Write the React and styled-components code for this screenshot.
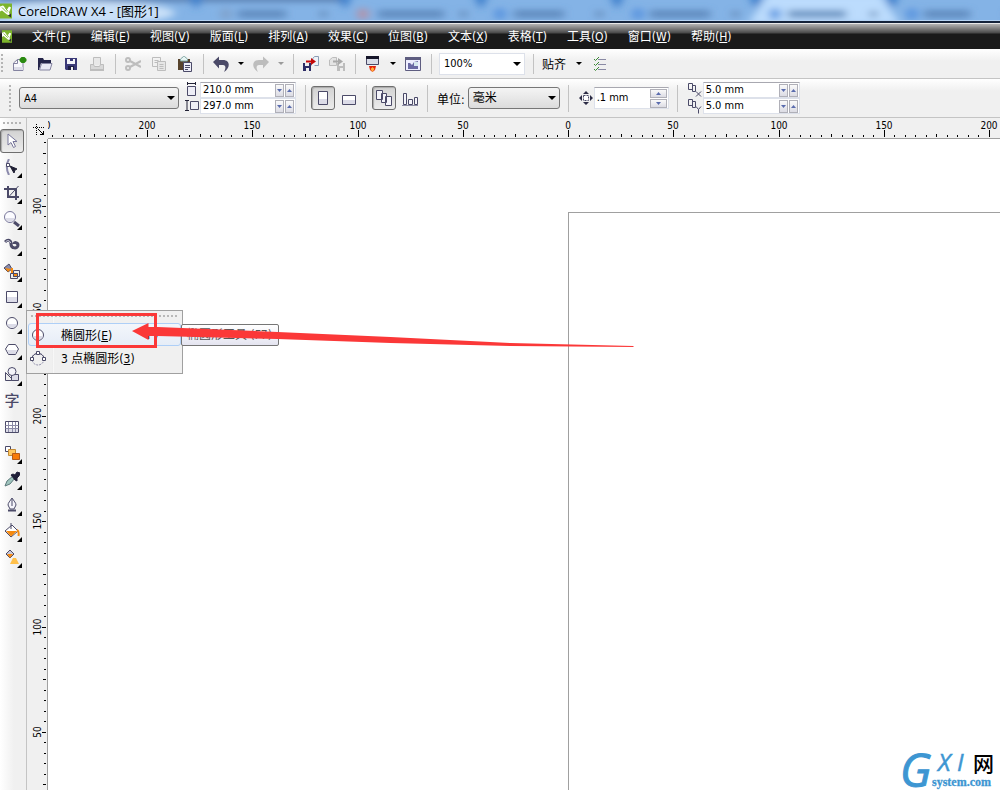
import styled, { createGlobalStyle, css } from "styled-components";

const uiFont = `"DejaVu Sans Condensed", "Noto Sans CJK SC", sans-serif`;
const titleFont = `"Open Sans", "Noto Sans CJK SC", sans-serif`;

const GlobalStyle = createGlobalStyle`
  * {
    box-sizing: border-box;
  }
  body {
    margin: 0;
    overflow: hidden;
    font-family: ${uiFont};
    font-size: 12px;
    color: #000;
    background: #f0f0f0;
  }
  button, input, select {
    margin: 0;
    padding: 0;
    border: none;
    background: none;
    font: inherit;
    color: inherit;
  }
  svg {
    display: block;
  }
`;

const App = styled.div`
  position: relative;
  display: flex;
  flex-direction: column;
  height: 100vh;
`;

/* ---------- title + menu ---------- */

const TitleBar = styled.header`
  position: relative;
  display: flex;
  align-items: center;
  gap: 6px;
  height: 23px;
  overflow: hidden;
  background: #84b3e6;
  border-bottom: 2px solid #14233a;
`;
const TabsBehind = styled.svg`
  position: absolute;
  top: 0;
  left: 0;
`;
const Title = styled.h1`
  position: relative;
  margin: 0;
  font-family: ${titleFont};
  font-size: 13px;
  line-height: 20px;
  font-weight: 400;
`;
const LogoBox = styled.span`
  position: relative;
`;
const MenuBar = styled.nav`
  display: flex;
  align-items: center;
  height: 26px;
  padding-left: 2px;
  border-top: 1px solid #e8e8e8;
  background: linear-gradient(#b4b4b4, #484848 9px, #1a1a1a 10px);
`;
const MenuList = styled.div`
  display: flex;
  gap: 20px;
  padding-left: 20px;
`;
const MenuButton = styled.button`
  line-height: 20px;
  color: #fff;
  white-space: nowrap;
`;

/* ---------- toolbars ---------- */

const Bar = styled.div`
  display: flex;
  align-items: center;
  flex-shrink: 0;
  height: ${(p) => p.$height};
  padding-left: ${(p) => p.$left};
  background: linear-gradient(#fff, #f0f0f0 12px);
  border-bottom: 1px solid #c4c4c4;
`;
const Grip = styled.span`
  width: 3px;
  height: ${(p) => p.$length};
  margin-right: ${(p) => p.$after};
  background: radial-gradient(circle at 1px 1px, #b4b4b4 1px, transparent 1px) 0 0 / 4px 4px;
`;
const Separator = styled.span`
  flex-shrink: 0;
  width: 1px;
  height: ${(p) => p.$length || "20px"};
  margin-left: ${(p) => p.$before || "5px"};
  margin-right: ${(p) => p.$after || "4px"};
  background: #c2c2c2;
`;
const IconButton = styled.button`
  display: flex;
  align-items: center;
  justify-content: center;
  flex-shrink: 0;
  width: 26px;
  height: 24px;
`;
const pressed = css`
  border: 1px solid #6e6e6e;
  border-radius: 3px;
  background: linear-gradient(#d2d2d2, #ececec);
  box-shadow: inset 1px 1px 1px #aaa;
`;
const ToggleButton = styled(IconButton)`
  width: 24px;
  ${(p) => p.$on && pressed}
`;
const TogglePair = styled.div`
  display: flex;
  gap: 2px;
`;
const CaretButton = styled.button`
  display: flex;
  justify-content: center;
  width: 14px;
`;
const SnapButton = styled.button`
  padding: 0 6px 0 4px;
`;
const Caret = styled.span`
  width: 0;
  height: 0;
  border: ${(p) => p.$size || 3}px solid transparent;
  border-top-color: ${(p) => p.$color || "#000"};
  border-bottom: none;
`;

const SelectBox = styled.div`
  display: grid;
  flex-shrink: 0;
  align-items: center;
  width: ${(p) => p.$width};
  height: 22px;
  margin: ${(p) => p.$margin || 0};
  border: 1px solid ${(p) => (p.$flat ? "#dde1ea" : "#777")};
  border-radius: ${(p) => (p.$flat ? 0 : "3px")};
  background: ${(p) => (p.$flat ? "#fff" : "linear-gradient(#f4f4f4, #dcdcdc)")};

  select, ${Caret} {
    grid-area: 1 / 1;
  }
  select {
    width: 100%;
    height: 20px;
    padding-left: 4px;
    appearance: none;
    font-size: ${(p) => p.$font || "11px"};
  }
  ${Caret} {
    justify-self: end;
    margin-right: 3px;
    pointer-events: none;
  }
`;

const FieldStack = styled.div`
  display: grid;
  grid-template-columns: 15px ${(p) => p.$width};
  grid-auto-rows: 16px;
  align-items: center;
  column-gap: ${(p) => p.$gap || 0};
`;
const Field = styled.div`
  display: flex;
  align-items: center;
  gap: 1px;
  width: ${(p) => p.$width || "auto"};
  height: ${(p) => p.$height || "16px"};
  padding-right: 1px;
  border: 1px solid #dde1ea;
  border-top-color: ${(p) => (p.$soft ? "#dde1ea" : "#a8a8b0")};
  background: #fff;

  input {
    flex: 1;
    min-width: 0;
    padding-left: 2px;
    font-size: 11px;
    line-height: 14px;
  }
`;
const SpinPair = styled.span`
  display: flex;
  flex-direction: ${(p) => (p.$stacked ? "column" : "row")};
  gap: 1px;
`;
const SpinButton = styled.button`
  display: flex;
  align-items: center;
  justify-content: center;
  width: ${(p) => (p.$wide ? "17px" : "9px")};
  height: ${(p) => (p.$wide ? "9px" : "13px")};
  border: 1px solid #b0b0b8;
  background: linear-gradient(#fafafa, #dcdce4);
`;
const UnitLabel = styled.label`
  padding: 0 3px 0 5px;
`;

/* ---------- body ---------- */

const Body = styled.div`
  display: flex;
  flex: 1;
  min-height: 0;
`;
const Toolbox = styled.aside`
  flex-shrink: 0;
  width: 27px;
  padding-top: 4px;
  border-right: 1px solid #c4c4c4;
  background: linear-gradient(to right, #fff, #f0f0f0 14px);
`;
const ToolGrip = styled.div`
  height: 6px;
  margin: 0 3px 1px;
  background: radial-gradient(circle at 1px 1px, #b4b4b4 1px, transparent 1px) 0 0 / 4px 8px;
`;
const ToolSlot = styled.div`
  position: relative;
  height: 26px;
`;
const ToolButton = styled.button`
  position: relative;
  display: flex;
  align-items: center;
  justify-content: center;
  width: 24px;
  height: 24px;
  ${(p) => p.$on && pressed}
`;
const MoreMark = styled.span`
  position: absolute;
  right: 2px;
  bottom: 1px;
  width: 5px;
  height: 5px;
  background: #000;
  clip-path: polygon(100% 0, 100% 100%, 0 100%);
`;

const Flyout = styled.div`
  position: absolute;
  z-index: 2;
  top: -1px;
  left: 26px;
  width: 157px;
  height: 64px;
  border: 1px solid #a0a0a0;
  background: linear-gradient(to right, #f0f0f0 25px, #dcdcdc 25px, #fff 26px, #f0f0f0 27px);
`;
const FlyoutGrip = styled.div`
  height: 6px;
  margin: 4px 4px 2px;
  background: radial-gradient(circle at 1px 1px, #b8b8b8 1px, transparent 1px) 0 0 / 4px 8px;
`;
const FlyoutItem = styled.button`
  display: flex;
  align-items: center;
  width: 153px;
  height: 23px;
  margin-left: 1px;
  padding: 0 20px 0 1px;
  border: 1px solid ${(p) => (p.$active ? "#aecff7" : "transparent")};
  border-radius: 3px;
  background: ${(p) => (p.$active ? "linear-gradient(#f3f6fb, #e6edf7)" : "none")};
  text-align: left;
  white-space: nowrap;
`;
const FlyoutText = styled.span`
  flex: 1;
  padding-left: 15px;
`;
const Tooltip = styled.div`
  position: absolute;
  z-index: 3;
  top: 13px;
  left: 181px;
  height: 22px;
  padding: 0 6px 0 5px;
  border: 1px solid #767676;
  border-radius: 2px;
  background: linear-gradient(#fff, #e4e4f0);
  color: #575757;
  line-height: 20px;
  white-space: nowrap;
`;

const Workspace = styled.main`
  display: grid;
  flex: 1;
  grid-template: 21px minmax(0, 1fr) / 21px minmax(0, 1fr);
  min-width: 0;
`;
const Corner = styled.div`
  display: flex;
  align-items: end;
  justify-content: center;
  padding: 0 0 2px 3px;
`;
const TopRuler = styled.div`
  overflow: hidden;
  border-bottom: 1px solid #a0a0a0;
`;
const SideRuler = styled.div`
  overflow: hidden;
  border-right: 1px solid #a0a0a0;
`;
const RulerSvg = styled.svg`
  font-size: 10px;
  text-anchor: middle;
`;
const Canvas = styled.section`
  position: relative;
  overflow: hidden;
  background: #fff;
`;
const Page = styled.div`
  position: absolute;
  top: 73px;
  left: 520px;
  width: 443px;
  height: 626px;
  border: 1px solid #a0a0a0;
`;
const Watermark = styled.svg`
  position: absolute;
  right: 4px;
  bottom: 0;
`;
const Annotation = styled.svg`
  position: absolute;
  z-index: 5;
  top: 305px;
  left: 30px;
  pointer-events: none;
`;

/* ---------- icons ---------- */

const ink = "#4b4a68";
const pale = "#dcdce8";
const grey = "#bdbdbd";

const Icon = ({ size = 16, children }) => (
  <svg width={size} height={size} viewBox={`0 0 ${size} ${size}`} fill="none" stroke={ink} aria-hidden="true">
    {children}
  </svg>
);

const icons = {
  newDoc: (
    <>
      <path d="M2.500 14.500V7l4-3.500h5.500v11z" fill="#f8f8fc" stroke="#8483a0" />
      <path d="M2.500 7.500h4v-4" stroke="#8483a0" />
      <path d="M3 11h9v3H3z" fill={pale} stroke="none" />
      <path d="M10.500 1h3l2 2v2l-2 2h-3l-2-2V3z" fill="#2a8a10" stroke="none" />
    </>
  ),
  open: (
    <>
      <path d="M1 2h5l1 2h7v3H4l-2 7H1z" fill="#25254a" stroke="none" />
      <path d="M4.500 7.500h10.500l-2 6.500H2.500z" fill="#e9e9f4" stroke="#8483a0" />
    </>
  ),
  save: (
    <>
      <path d="M2 2h12v12H3l-1-1z" fill="#3b3a78" stroke="none" />
      <path d="M4 3h8v5H4z" fill="#f4f4fa" stroke="none" />
      <path d="M5 10h6v4H5z" fill="#1d1d44" stroke="none" />
      <path d="M8 11h2v3H8z" fill="#eee" stroke="none" />
      <path d="M7 2h3v3H7z" fill="#3b3a78" stroke="none" />
    </>
  ),
  print: (
    <g stroke={grey}>
      <path d="M4.500 9V1.500h7V9" fill="#e8e8e8" />
      <path d="M1.500 8.500h3l1 2h5l1-2h3v6h-13z" fill="#d8d8d8" />
      <path d="M1 14h14" strokeWidth="2" />
    </g>
  ),
  cut: (
    <g stroke={grey} strokeWidth="2">
      <circle cx="3" cy="4" r="2" />
      <circle cx="3" cy="12" r="2" />
      <path d="M5 5l11 6M5 11l11-6" />
    </g>
  ),
  copy: (
    <g stroke={grey}>
      <path d="M1.500 1.500h8v9h-8zM3.500 4.500h4M3.500 6.500h3" />
      <path d="M6.500 5.500h8v9h-8z" fill="#e6e6e6" />
      <path d="M8.500 8.500h4M8.500 10.500h4M8.500 12.500h4" />
    </g>
  ),
  paste: (
    <>
      <path d="M1 3h12v11H1z" fill="#57432c" stroke="none" />
      <path d="M3.500 5V3l3-2.500h1l3 2.500v2z" fill="#e6f4f2" stroke="#7fa5a3" />
      <path d="M6.500 6.500h8v9h-8z" fill="#eeeef8" />
      <path d="M8 9.500h5M8 11.500h5M8 13.500h3" />
    </>
  ),
  undo: <path d="M0 6l6-5.500V4h4c7.500 0 7.500 8 1 12 2-4 2-7-1-7H6v3.500z" fill={ink} stroke="none" />,
  redo: <path d="M16 6l-6-5.500V4H6c-7.500 0-7.500 8-1 12-2-4-2-7 1-7h4v3.500z" fill={grey} stroke="none" />,
  importFile: (
    <>
      <path d="M8.500 9.500V4l3-3.500h4v9h-4" fill="#eef2f8" stroke="#8a9db5" />
      <path d="M0 7h8v8H0z" fill="#2d2c66" stroke="none" />
      <path d="M2 7h4v3H2zM3 12h3v3H3z" fill="#eee" stroke="none" />
      <path d="M3 5.500h6" stroke="#c40808" strokeWidth="2" />
      <path d="M8 2l5 3.500L8 9z" fill="#c40808" stroke="none" />
    </>
  ),
  exportFile: (
    <g>
      <path d="M.5 9.500V4l3-2.500h4v8z" fill="#e4e4e4" stroke={grey} />
      <path d="M8 7h8v8H8z" fill={grey} stroke="none" />
      <path d="M10 7h4v3h-4zM11 12h3v3h-3z" fill="#eee" stroke="none" />
      <path d="M4 5.500h6" stroke="#a9a9a9" strokeWidth="2" />
      <path d="M9 2l5 3.500L9 9z" fill="#a9a9a9" stroke="none" />
    </g>
  ),
  launcher: (
    <>
      <path d="M1.500.500h12v8h-12z" fill="#d9dde8" />
      <path d="M1 0h13v3H1z" fill="#16162a" stroke="none" />
      <path d="M4 10h7l-1 4-2.500 2L5 14z" fill="#e3230c" stroke="none" />
      <path d="M7.500 11l2 2-2 3-2-3z" fill="#ffb23c" stroke="none" />
    </>
  ),
  welcome: (
    <>
      <path d="M.5 1.500h15v13H.5z" fill="#eef" stroke="#5e5d80" />
      <path d="M0 1h16v3H0z" fill="#5e5d80" stroke="none" />
      <path d="M3 7h2l2 2 2-3 4-1v8H3z" fill="#6a69a4" stroke="none" />
      <path d="M9 6h4v4H9z" fill="#d6e8ee" stroke="none" />
    </>
  ),
  options: (
    <>
      <path d="M7 3.500h8M7 8.500h8M7 13.500h8" stroke="#8a8aa4" />
      <path d="M3 3l1.500 1.500L8 1M3 8l1.500 1.500L8 6M3 13l1.500 1.500L8 11" stroke="#3c8a36" />
    </>
  ),
  pageWidth: (
    <>
      <path d="M2.500 4.500h8v9h-8z" fill="#eeeef6" />
      <path d="M2.500 0v3M10.500 0v3M2 1.500h9" stroke="#222236" />
    </>
  ),
  pageHeight: (
    <>
      <path d="M5.500 3.500h8v8h-8z" fill="#eeeef6" />
      <path d="M0 2.500h4M0 12.500h4M2 3v9" stroke="#222236" />
    </>
  ),
  portrait: (
    <>
      <path d="M3.500 1.500h9v13h-9z" fill="#fff" />
      <path d="M4 9h8v5H4z" fill={pale} stroke="none" />
    </>
  ),
  landscape: (
    <>
      <path d="M1.500 5.500h13v9h-13z" fill="#fff" />
      <path d="M2 10h12v4H2z" fill={pale} stroke="none" />
    </>
  ),
  allPages: (
    <g fill="#f4f4fa">
      <path d="M.5.500h6v9h-6zM5.500 3.500h5v9h-5zM9.500 6.500h6v9h-6z" />
    </g>
  ),
  thisPage: (
    <g fill="#f4f4fa">
      <path d="M1.500 3.500h3v11h-3zM6.500 9.500h4v5h-4zM12.500 7.500h3v7h-3z" />
      <path d="M0 15.500h16" stroke="#8c8ca4" />
    </g>
  ),
  nudge: (
    <>
      <path d="M5.500 5.500h5v5h-5z" fill="#fff" strokeDasharray="2 1" />
      <path d="M8 1l3 3H5zM8 15l3-3H5zM1 8l3-3v6zM15 8l-3-3v6z" fill="#2b2b44" stroke="none" />
    </>
  ),
  dupX: <path d="M1.500 1.500h4v6h-4zM5.500 3.500h3v6h-3zM9 9.500l5 5M14 9.500l-5 5" />,
  dupY: <path d="M1.500 1.500h4v6h-4zM5.500 3.500h3v6h-3zM9 8.500l2.500 3 2.500-3M11.500 11.500v4" />,

  pick: <path d="M4 1v11l3-2.500 2.500 5 2-1-2.500-5h4z" fill="#fff" stroke="#77769a" />,
  shape: (
    <>
      <path d="M5 0C2 5 2 10 5 16" stroke="#8b8aac" strokeWidth="2" />
      <path d="M2.500 4.500h3v3h-3z" fill="#fff" />
      <path d="M6 7l7 3-2 1-1 3z" fill="#1f1f33" stroke="#1f1f33" />
    </>
  ),
  crop: (
    <>
      <path d="M4 1v11h11M0 4h12v11" strokeWidth="2" />
      <path d="M14.500 1l-9 10" />
    </>
  ),
  zoom: (
    <>
      <path d="M10 11l5 4" strokeWidth="3" />
      <circle cx="6" cy="6" r="5.500" fill="#fbfbff" stroke="#77769a" />
      <path d="M1.500 7h9c-1 5-8 5-9 0z" fill={pale} stroke="none" />
    </>
  ),
  freehand: (
    <>
      <path d="M1 5c3-3 6-2 6 2 0 5 7 5 7 1 0-3-4-3-4-1" strokeWidth="3" />
      <path d="M1.500 5c2-2 4-2 5 1" stroke="#dcdce8" />
    </>
  ),
  smartFill: (
    <>
      <path d="M0 5l5-4 3 5-4 3z" fill="#8d8daa" />
      <path d="M1 5l6 1-3 3z" fill="#f58a10" stroke="none" />
      <path d="M8 5v6" stroke="#f58a10" strokeWidth="2" />
      <path d="M9.500 7.500h6v6h-6zM6.500 10.500h7v5h-7z" fill="#eee" />
      <path d="M9.500 10.500h4v3h-4z" fill="#f58a10" stroke={ink} />
    </>
  ),
  rect: (
    <>
      <path d="M2.500 2.500h11v11h-11z" fill="#fff" />
      <path d="M3 8h10v5H3z" fill={pale} stroke="none" />
    </>
  ),
  ellipse: (
    <>
      <circle cx="8" cy="8" r="5.500" fill="#fff" />
      <path d="M3 9h10c-1 5-9 5-10 0z" fill={pale} stroke="none" />
    </>
  ),
  polygon: (
    <>
      <path d="M4.500 3.500h7L14.500 8l-3 5.500h-7L1.500 8z" fill="#fff" />
      <path d="M3 9h10l-2 4H5z" fill={pale} stroke="none" />
    </>
  ),
  basic: (
    <>
      <path d="M1.500 5.500v8h8z" fill="#eee" />
      <path d="M7.500 7.500h7v6h-7z" fill={pale} />
      <circle cx="8" cy="4.500" r="4" fill="#f4f4fa" />
    </>
  ),
  table: (
    <>
      <path d="M1.500 2.500h13v11h-13z" fill="#fff" />
      <path d="M2 10h12v3H2z" fill={pale} stroke="none" />
      <path d="M1.500 6.500h13M1.500 9.500h13M4.500 3v10M8.500 3v10M11.500 3v10" stroke="#8b8aa6" />
    </>
  ),
  blend: (
    <>
      <path d="M1.500 1.500h5v5h-5z" fill="#fff" />
      <path d="M4.500 4.500h7v6h-7z" fill="#ffc860" stroke="#c38a35" />
      <path d="M8.500 8.500h7v6h-7z" fill="#f77a08" stroke="#b25a1a" />
    </>
  ),
  dropper: (
    <>
      <path d="M1 15l2-5 6-5 2 2-5 6z" fill="#9fc4bd" stroke="#5d7a7c" />
      <path d="M7 4l2-1 2 1 2-3 3 1-1 3-2 2 0 3-2-1z" fill="#1f1e38" stroke="#1f1e38" />
    </>
  ),
  pen: (
    <>
      <path d="M8 1C6 4 4 6 4 8l2 4h4l2-4c0-2-2-4-4-7z" fill="#f4f4fa" />
      <path d="M8 2v7" />
      <path d="M4 13.500h8" strokeWidth="2" />
    </>
  ),
  fill: (
    <>
      <path d="M1 8l7-6 6 6-7 6z" fill="#fff" />
      <path d="M2 8h11l-6 5.500z" fill="#f58a10" stroke="none" />
      <path d="M7 0v6" />
      <path d="M13 7c2 1 2 3 1.500 6" stroke="#f58a10" strokeWidth="2" />
    </>
  ),
  interactiveFill: (
    <>
      <path d="M2 5l4-4 4 4-4 4z" fill="#c9c9d9" />
      <path d="M3 5h6L6 9z" fill="#f58a10" stroke="none" />
      <path d="M9 9h3l3 6H6z" fill="#ffc04a" stroke="none" />
    </>
  ),
  ellipse3: (
    <>
      <circle cx="8" cy="9" r="6" strokeDasharray="2 1" stroke="#8f8eaa" />
      <path d="M2 8c1-6 11-6 12 0" />
      <path d="M.5 7.500h3v3h-3zM12.500 7.500h3v3h-3zM6.500 1.500h3v3h-3z" fill="#fff" />
    </>
  ),
  origin: (
    <>
      <path d="M3.500 0v11M0 3.500h11" stroke="#000" strokeDasharray="1 1" />
      <path d="M5 5l5 5M10.500 7v4M7 10.500h4" stroke="#000" />
    </>
  ),
};

const CorelLogo = ({ width, height }) => (
  <svg width={width} height={height} viewBox="0 0 12 15" aria-hidden="true">
    <path d="M0 0h12v15H0z" fill="#7db52c" />
    <path d="M0 3l3-1 4 4 2-3 2 1-2 5 1 3-3-1-5-4-2 1z" fill="#fff" />
    <path d="M2 4l5 5M5 4l3 4" stroke="#7db52c" />
    <path d="M8 12l3-2v4z" fill="#333" />
  </svg>
);

/* ---------- data ---------- */

const menus = [
  ["文件", "F"], ["编辑", "E"], ["视图", "V"], ["版面", "L"], ["排列", "A"], ["效果", "C"],
  ["位图", "B"], ["文本", "X"], ["表格", "T"], ["工具", "O"], ["窗口", "W"], ["帮助", "H"],
];

const tools = [
  { icon: "pick", label: "挑选", on: true },
  { icon: "shape", label: "形状", more: true },
  { icon: "crop", label: "裁剪", more: true },
  { icon: "zoom", label: "缩放", more: true },
  { icon: "freehand", label: "手绘", more: true },
  { icon: "smartFill", label: "智能填充", more: true },
  { icon: "rect", label: "矩形", more: true },
  { icon: "ellipse", label: "椭圆形", more: true, flyout: true },
  { icon: "polygon", label: "多边形", more: true },
  { icon: "basic", label: "基本形状", more: true },
  { glyph: "字", label: "文本" },
  { icon: "table", label: "表格" },
  { icon: "blend", label: "调和", more: true },
  { icon: "dropper", label: "滴管", more: true },
  { icon: "pen", label: "轮廓", more: true },
  { icon: "fill", label: "填充", more: true },
  { icon: "interactiveFill", label: "交互式填充", more: true },
];

const TextGlyph = styled.span`
  font-size: 15px;
  line-height: 20px;
  font-weight: 500;
  color: ${ink};
`;

/* ---------- rulers ---------- */

const SCALE = 2.105; // screen px per mm at 100%

const ticks = (from, to) => {
  const list = [];
  for (let mm = from; mm <= to; mm += 5) list.push(mm);
  return list;
};
const tickLength = (mm, major) => (mm % 50 === 0 ? major : mm % 25 === 0 ? 3 : 2);

const HorizontalRuler = () => (
  <TopRuler>
    <RulerSvg width="100%" height="20">
      {ticks(-250, 640).map((mm) => {
        const x = Math.round(520 + mm * SCALE);
        const len = tickLength(mm, 7);
        return (
          <g key={mm}>
            <rect x={x} y={19 - len} width="1" height={len} />
            {mm % 50 === 0 && <text x={x} y="11">{Math.abs(mm)}</text>}
          </g>
        );
      })}
    </RulerSvg>
  </TopRuler>
);

const VerticalRuler = () => (
  <SideRuler>
    <RulerSvg width="20" height="100%">
      {ticks(-190, 330).map((mm) => {
        const y = Math.round(698 - mm * SCALE);
        const len = tickLength(mm, 4);
        return (
          <g key={mm}>
            <rect x={19 - len} y={y} width={len} height="1" />
            {mm % 50 === 0 && (
              <text transform={`translate(14 ${y}) rotate(-90)`}>{Math.abs(mm)}</text>
            )}
          </g>
        );
      })}
    </RulerSvg>
  </SideRuler>
);

/* ---------- small pieces ---------- */

const Tool = ({ name, label, size }) => (
  <IconButton aria-label={label}>
    <Icon size={size}>{icons[name]}</Icon>
  </IconButton>
);

const Select = ({ id, label, value, ...box }) => (
  <SelectBox {...box}>
    <select id={id} aria-label={label} defaultValue={value}>
      <option>{value}</option>
    </select>
    <Caret $size={4} />
  </SelectBox>
);

const Arrow = ({ up }) => (
  <svg width="5" height="3" aria-hidden="true">
    <path d={up ? "M0 3L2.500 0 5 3z" : "M0 0h5L2.500 3z"} fill="#5a6cae" />
  </svg>
);

const Spin = ({ label, value, soft }) => (
  <Field $soft={soft}>
    <input aria-label={label} defaultValue={value} />
    <SpinPair>
      <SpinButton aria-label={`${label} -`}><Arrow /></SpinButton>
      <SpinButton aria-label={`${label} +`}><Arrow up /></SpinButton>
    </SpinPair>
  </Field>
);

const EllipseFlyout = () => (
  <>
    <Flyout>
      <FlyoutGrip />
      <FlyoutItem $active>
        <Icon>{icons.ellipse}</Icon>
        <FlyoutText>椭圆形(<u>E</u>)</FlyoutText>
        F7
      </FlyoutItem>
      <FlyoutItem>
        <Icon>{icons.ellipse3}</Icon>
        <FlyoutText>3 点椭圆形(<u>3</u>)</FlyoutText>
      </FlyoutItem>
    </Flyout>
    <Tooltip role="tooltip">椭圆形工具 (F7)</Tooltip>
  </>
);

/* browser tabs showing through the glass title bar */
const tabs = [
  { dot: 226, color: "#7f9cc4", x: 238, w: 48 },
  { dot: 363, color: "#c08a98", x: 378, w: 66 },
  { dot: 500, color: "#4d8bdc", x: 514, w: 50 },
  { dot: 638, color: "#4d8bdc", x: 650, w: 60 },
  { dot: 775, color: "#4d8bdc", x: 788, w: 58 },
  { dot: 912, color: "#4d8bdc", x: 924, w: 46 },
];

const GlassTabs = () => (
  <TabsBehind width="1000" height="21" aria-hidden="true">
    <defs>
      <filter id="soft" x="-5%" y="-50%" width="110%" height="200%">
        <feGaussianBlur stdDeviation="4 3" />
      </filter>
    </defs>
    <g filter="url(#soft)">
      <path d="M0 -6h345v8H0z" fill="#5c82b4" />
      <ellipse cx="80" cy="13" rx="95" ry="12" fill="#c9e0f8" />
      {[196, 345, 481, 617, 756, 892].map((x) => (
        <path key={x} d={`M${x - 8} -6h16l-8 16z`} fill="#3c7fcb" />
      ))}
      <path d="M748 24l20-30h112l20 30z" fill="#bcdcfd" />
      {tabs.map((t) => (
        <g key={t.x} opacity="0.75">
          <circle cx={t.dot} cy="14" r="6" fill={t.color} />
          <rect x={t.x} y="10" width={t.w} height="8" fill="#557fb2" />
          <rect x={t.x + 82} y="11" width="7" height="6" fill="#5c80ad" />
        </g>
      ))}
    </g>
    <path d="M0 20.500h1000" stroke="#b4d2f2" />
  </TabsBehind>
);

const CorelWindow = () => (
  <App>
    <GlobalStyle />
    <TitleBar>
      <GlassTabs />
      <LogoBox><CorelLogo width={12} height={16} /></LogoBox>
      <Title>CorelDRAW X4 - [图形1]</Title>
    </TitleBar>

    <MenuBar>
      <CorelLogo width={10} height={15} />
      <MenuList>
        {menus.map(([name, key]) => (
          <MenuButton key={key}>{name}(<u>{key}</u>)</MenuButton>
        ))}
      </MenuList>
    </MenuBar>

    <Bar $height="30px" $left="1px">
      <Grip $length="19px" $after="2px" />
      <Tool name="newDoc" label="新建" />
      <Tool name="open" label="打开" />
      <Tool name="save" label="保存" />
      <Tool name="print" label="打印" />
      <Separator />
      <Tool name="cut" label="剪切" />
      <Tool name="copy" label="复制" />
      <Tool name="paste" label="粘贴" />
      <Separator />
      <Tool name="undo" label="撤消" />
      <CaretButton aria-label="撤消列表"><Caret /></CaretButton>
      <Tool name="redo" label="重做" />
      <CaretButton aria-label="重做列表"><Caret $color="#9a9a9a" /></CaretButton>
      <Separator />
      <Tool name="importFile" label="导入" />
      <Tool name="exportFile" label="导出" />
      <Separator />
      <Tool name="launcher" label="应用程序启动器" />
      <CaretButton aria-label="应用程序列表"><Caret /></CaretButton>
      <Tool name="welcome" label="欢迎屏幕" />
      <Separator />
      <Select label="缩放级别" value="100%" $flat $width="86px" $margin="0 3px" />
      <Separator />
      <SnapButton>贴齐</SnapButton>
      <CaretButton aria-label="贴齐列表"><Caret /></CaretButton>
      <Tool name="options" label="选项" />
    </Bar>

    <Bar $height="39px" $left="9px">
      <Grip $length="27px" $after="7px" />
      <Select label="纸张类型" value="A4" $width="160px" $margin="0 6px 0 0" />
      <FieldStack $width="96px">
        <Icon>{icons.pageWidth}</Icon>
        <Spin label="纸张宽度" value="210.0 mm" />
        <Icon>{icons.pageHeight}</Icon>
        <Spin label="纸张高度" value="297.0 mm" soft />
      </FieldStack>
      <Separator $length="27px" $before="9px" $after="5px" />
      <TogglePair>
        <ToggleButton $on aria-label="纵向"><Icon>{icons.portrait}</Icon></ToggleButton>
        <ToggleButton aria-label="横向"><Icon>{icons.landscape}</Icon></ToggleButton>
      </TogglePair>
      <Separator $length="27px" $after="5px" />
      <TogglePair>
        <ToggleButton $on aria-label="所有页面"><Icon>{icons.allPages}</Icon></ToggleButton>
        <ToggleButton aria-label="当前页"><Icon>{icons.thisPage}</Icon></ToggleButton>
      </TogglePair>
      <Separator $length="27px" />
      <UnitLabel htmlFor="units">单位:</UnitLabel>
      <Select id="units" value="毫米" $width="92px" $font="12px" />
      <Separator $length="27px" $before="8px" $after="9px" />
      <Icon>{icons.nudge}</Icon>
      <Field $width="75px" $height="22px">
        <input aria-label="微调偏移" defaultValue=".1 mm" />
        <SpinPair $stacked>
          <SpinButton $wide aria-label="微调偏移 +"><Arrow up /></SpinButton>
          <SpinButton $wide aria-label="微调偏移 -"><Arrow /></SpinButton>
        </SpinPair>
      </Field>
      <Separator $length="27px" $before="8px" $after="9px" />
      <FieldStack $width="97px" $gap="1px">
        <Icon>{icons.dupX}</Icon>
        <Spin label="再制距离 X" value="5.0 mm" />
        <Icon>{icons.dupY}</Icon>
        <Spin label="再制距离 Y" value="5.0 mm" soft />
      </FieldStack>
    </Bar>

    <Body>
      <Toolbox>
        <ToolGrip />
        {tools.map((t) => (
          <ToolSlot key={t.label}>
            <ToolButton $on={t.on} aria-label={t.label}>
              {t.glyph ? <TextGlyph>{t.glyph}</TextGlyph> : <Icon>{icons[t.icon]}</Icon>}
              {t.more && <MoreMark />}
            </ToolButton>
            {t.flyout && <EllipseFlyout />}
          </ToolSlot>
        ))}
      </Toolbox>

      <Workspace>
        <Corner><Icon size={13}>{icons.origin}</Icon></Corner>
        <HorizontalRuler />
        <VerticalRuler />
        <Canvas>
          <Page />
          <Watermark width="96" height="42" role="img" aria-label="GXI网 system.com">
            <g fill="#3d96d2" stroke="#3d96d2">
              <text x="0" y="39" fontFamily="Open Sans" fontSize="46" fontStyle="italic">G</text>
              <text x="38" y="23" fontFamily="Open Sans" fontSize="24" fontStyle="italic" strokeWidth="0.5">X</text>
              <text x="57" y="23" fontFamily="Open Sans" fontSize="24" fontStyle="italic" strokeWidth="0.5">I</text>
              <text x="32" y="38" fontFamily="Liberation Serif" fontSize="12" fontWeight="700" strokeWidth="0.3">system.com</text>
            </g>
            <text x="73" y="23" fontFamily="Noto Sans CJK SC" fontSize="21" fontWeight="500" textAnchor="start">网</text>
          </Watermark>
        </Canvas>
      </Workspace>
    </Body>

    <Annotation width="610" height="50" aria-hidden="true">
      <rect x="7.500" y="9.500" width="118" height="32" fill="none" stroke="#fb3838" strokeWidth="3" />
      <path d="M102 26l16.500-8v4l9 0 120 5 113 5 120 6 123 3v1l-123-1-120-3-113-4-120-3-9 0v4z" fill="#fb3838" />
    </Annotation>
  </App>
);

export default CorelWindow;
